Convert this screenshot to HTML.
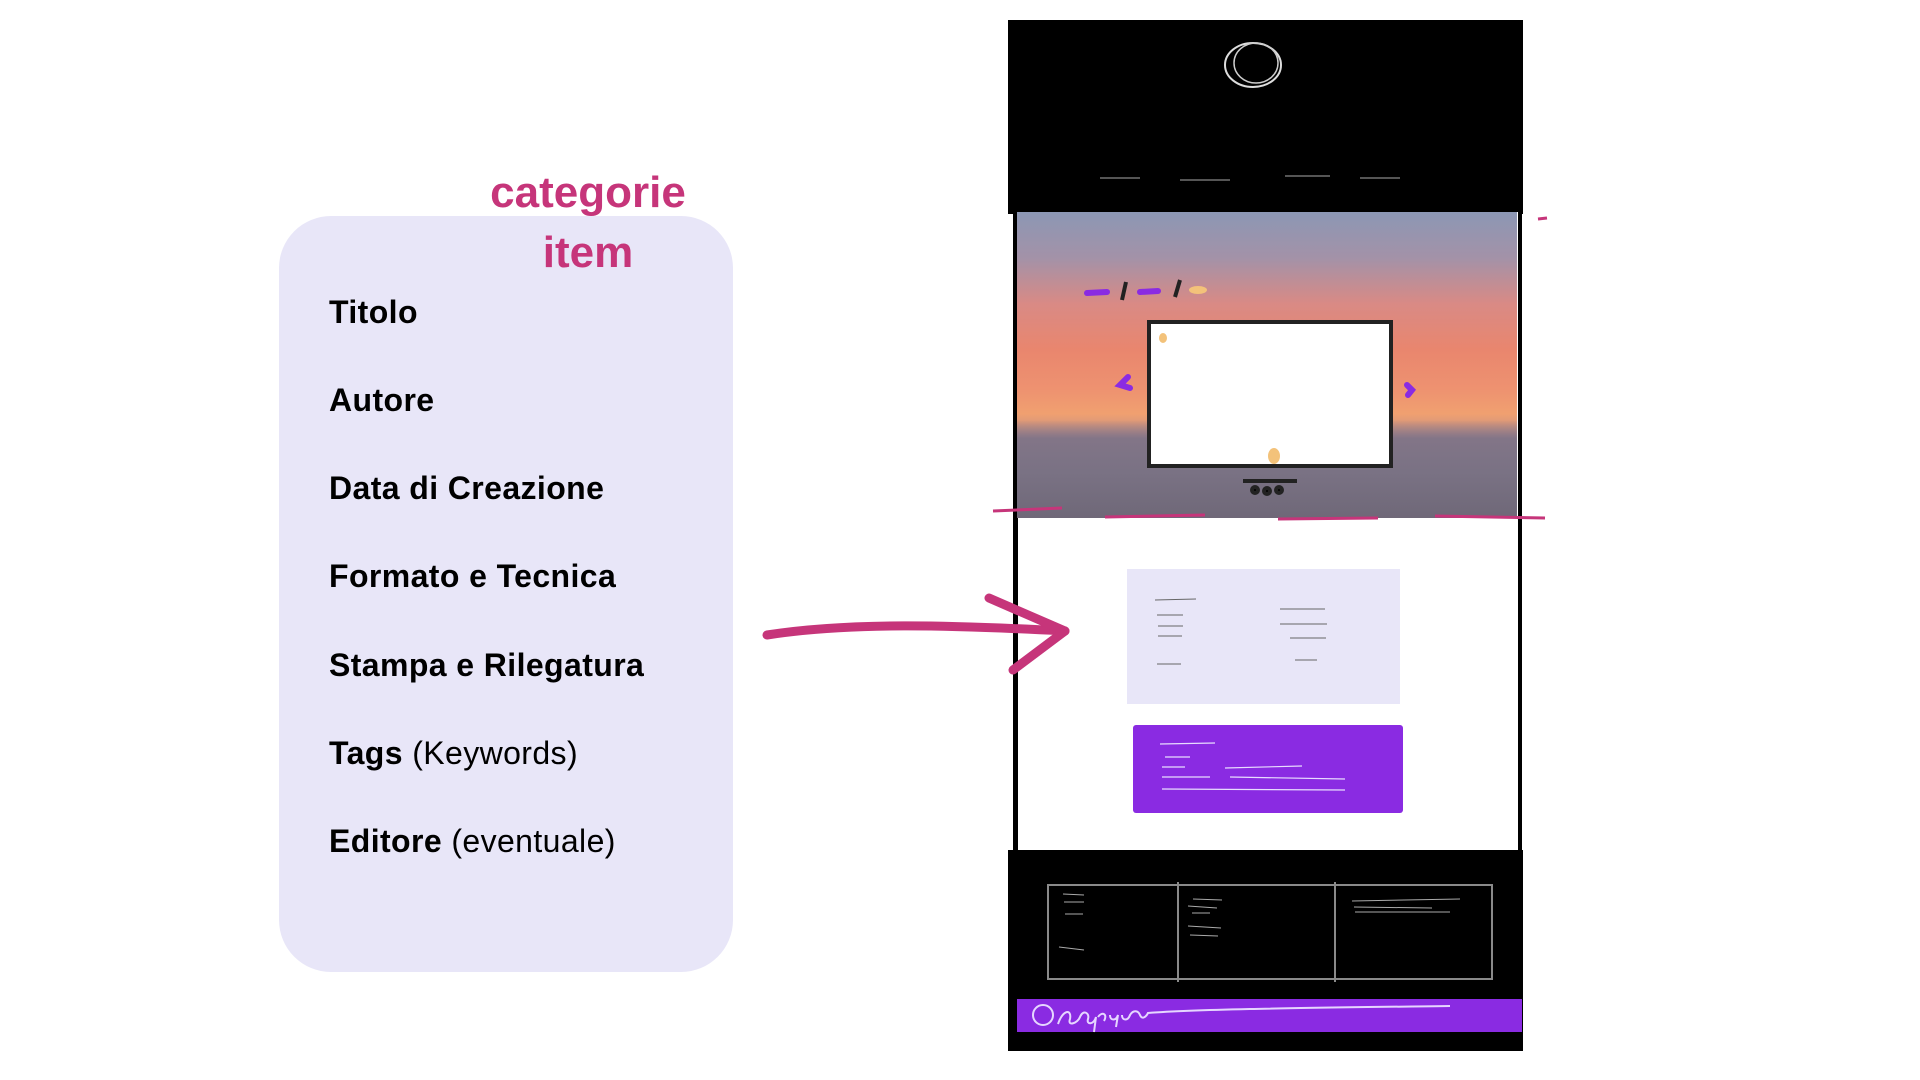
<!DOCTYPE html>
<html><head><meta charset="utf-8"><style>
html,body{margin:0;padding:0;width:1920px;height:1080px;background:#fff;overflow:hidden;position:relative;font-family:"Liberation Sans",sans-serif}
.a{position:absolute}
.card{left:279px;top:216px;width:454px;height:756px;background:#e8e6f8;border-radius:52px}
.lbl{left:329px;font-weight:bold;font-size:32px;color:#000;letter-spacing:0.4px}
.lbl span{font-weight:normal}
.cat{color:#c6357a;font-weight:bold;font-size:44px;width:300px;text-align:center;left:438px;letter-spacing:0px}
</style></head><body>
<div class="a card"></div>
<div class="a cat" style="top:168px">categorie</div>
<div class="a cat" style="top:228px">item</div>
<div class="a lbl" style="top:294px">Titolo</div>
<div class="a lbl" style="top:382px">Autore</div>
<div class="a lbl" style="top:470px">Data di Creazione</div>
<div class="a lbl" style="top:558px">Formato e Tecnica</div>
<div class="a lbl" style="top:647px">Stampa e Rilegatura</div>
<div class="a lbl" style="top:735px">Tags <span>(Keywords)</span></div>
<div class="a lbl" style="top:823px">Editore <span>(eventuale)</span></div>

<!-- phone -->
<div class="a" style="left:1008px;top:20px;width:515px;height:194px;background:#000"></div>
<div class="a" style="left:1013px;top:212px;width:509px;height:645px;border-left:5px solid #000;border-right:4px solid #000;box-sizing:border-box;background:#fff"></div>
<div class="a" style="left:1017px;top:212px;width:500px;height:306px;background:
linear-gradient(180deg,rgba(0,0,0,0) 0%,rgba(0,0,0,0) 68%,rgba(125,115,135,.9) 74%,#7a7284 85%,#6f6878 100%),
linear-gradient(180deg,#8c97b4 0%,#a392a8 15%,#d98a85 30%,#e9866e 45%,#ee9270 58%,#f0a070 66%,#b98a8a 74%,#7f7588 100%)"></div>
<div class="a" style="left:1147px;top:320px;width:246px;height:148px;background:#fff;border:4px solid #222;box-sizing:border-box"></div>
<svg class="a" style="left:0;top:0" width="1920" height="1080">
<ellipse cx="1253" cy="65" rx="28" ry="22" fill="none" stroke="#ddd" stroke-width="2"/>
<ellipse cx="1256" cy="63" rx="22" ry="20" fill="none" stroke="#ccc" stroke-width="1.5"/>
<g stroke="#555" stroke-width="2"><line x1="1100" y1="178" x2="1140" y2="178"/><line x1="1180" y1="180" x2="1230" y2="180"/><line x1="1285" y1="176" x2="1330" y2="176"/><line x1="1360" y1="178" x2="1400" y2="178"/></g>
<g stroke="#8a2be2" stroke-width="6" stroke-linecap="round"><line x1="1087" y1="293" x2="1107" y2="292"/><line x1="1140" y1="292" x2="1158" y2="291"/><path d="M1128 377 l-8 8 l10 3" fill="none"/><path d="M1407 385 l5 5 l-4 5" fill="none"/></g>
<g stroke="#222" stroke-width="4"><line x1="1122" y1="300" x2="1126" y2="282"/><line x1="1175" y1="297" x2="1180" y2="280"/><line x1="1243" y1="481" x2="1297" y2="481"/><circle cx="1255" cy="490" r="3"/><circle cx="1267" cy="491" r="3"/><circle cx="1279" cy="490" r="3"/></g>
<ellipse cx="1198" cy="290" rx="9" ry="4" fill="#f3c27a"/>
<ellipse cx="1163" cy="338" rx="4" ry="5" fill="#f3c27a"/>
<ellipse cx="1274" cy="456" rx="6" ry="8" fill="#f3c27a"/>
<g stroke="#c6357a" stroke-width="3"><line x1="993" y1="511" x2="1062" y2="508"/><line x1="1105" y1="517" x2="1205" y2="515"/><line x1="1278" y1="519" x2="1378" y2="518"/><line x1="1435" y1="516" x2="1545" y2="518"/><line x1="1538" y1="219" x2="1547" y2="218"/></g>
<path d="M767 635 C850 622 950 625 1065 631" fill="none" stroke="#c6357a" stroke-width="9" stroke-linecap="round"/>
<path d="M989 598 L1065 631 L1013 670" fill="none" stroke="#c6357a" stroke-width="9" stroke-linecap="round" stroke-linejoin="round"/>
</svg>
<div class="a" style="left:1127px;top:569px;width:273px;height:135px;background:#e8e6f8"></div>
<svg class="a" style="left:0;top:0" width="1920" height="1080">
<g stroke="#666" stroke-width="1"><line x1="1155" y1="600" x2="1196" y2="599"/><line x1="1157" y1="615" x2="1183" y2="615"/><line x1="1158" y1="626" x2="1183" y2="626"/><line x1="1158" y1="636" x2="1182" y2="636"/><line x1="1157" y1="664" x2="1181" y2="664"/><line x1="1280" y1="609" x2="1325" y2="609"/><line x1="1280" y1="624" x2="1327" y2="624"/><line x1="1290" y1="638" x2="1326" y2="638"/><line x1="1295" y1="660" x2="1317" y2="660"/></g>
</svg>
<div class="a" style="left:1133px;top:725px;width:270px;height:88px;background:#8a2be2;border-radius:3px"></div>
<svg class="a" style="left:0;top:0" width="1920" height="1080">
<g stroke="#e8dcff" stroke-width="1.2"><line x1="1160" y1="744" x2="1215" y2="743"/><line x1="1165" y1="757" x2="1190" y2="757"/><line x1="1162" y1="767" x2="1185" y2="767"/><line x1="1225" y1="768" x2="1302" y2="766"/><line x1="1162" y1="777" x2="1210" y2="777"/><line x1="1230" y1="777" x2="1345" y2="779"/><line x1="1162" y1="789" x2="1345" y2="790"/></g>
</svg>
<div class="a" style="left:1008px;top:850px;width:515px;height:201px;background:#000"></div>
<div class="a" style="left:1047px;top:884px;width:446px;height:96px;border:2px solid #8a8a8a;box-sizing:border-box"></div>
<div class="a" style="left:1177px;top:882px;width:2px;height:100px;background:#8a8a8a"></div>
<div class="a" style="left:1334px;top:882px;width:2px;height:100px;background:#8a8a8a"></div>
<svg class="a" style="left:0;top:-3px" width="1920" height="1080">
<g stroke="#aaa" stroke-width="1"><line x1="1063" y1="897" x2="1084" y2="898"/><line x1="1064" y1="905" x2="1084" y2="905"/><line x1="1065" y1="917" x2="1083" y2="917"/><line x1="1059" y1="950" x2="1084" y2="953"/><line x1="1193" y1="902" x2="1222" y2="903"/><line x1="1188" y1="909" x2="1217" y2="911"/><line x1="1192" y1="916" x2="1210" y2="916"/><line x1="1188" y1="929" x2="1221" y2="931"/><line x1="1190" y1="938" x2="1218" y2="939"/><line x1="1352" y1="904" x2="1460" y2="902"/><line x1="1354" y1="910" x2="1432" y2="911"/><line x1="1355" y1="915" x2="1450" y2="915"/></g>
</svg>
<div class="a" style="left:1017px;top:999px;width:505px;height:33px;background:#8a2be2"></div>
<svg class="a" style="left:0;top:-6px" width="1920" height="1080">
<circle cx="1043" cy="1021" r="10" fill="none" stroke="#e6d6ff" stroke-width="2"/>
<path d="M1058 1030 c5-15 14-15 12-5 c-3 8 8 4 10-2 c3-8 10-4 8 2 c-2 6 6 6 8-2 l-2 15 m4-15 c4-6 10-3 6 4 m6-6 c0 6 6 6 8 0 l-2 12 m6-12 c0 6 6 6 8 0 c3-5 8-5 10 0 c2 5 6 2 8-2 C1200 1015 1300 1014 1450 1012" fill="none" stroke="#e6d6ff" stroke-width="2"/>
</svg>
</body></html>
